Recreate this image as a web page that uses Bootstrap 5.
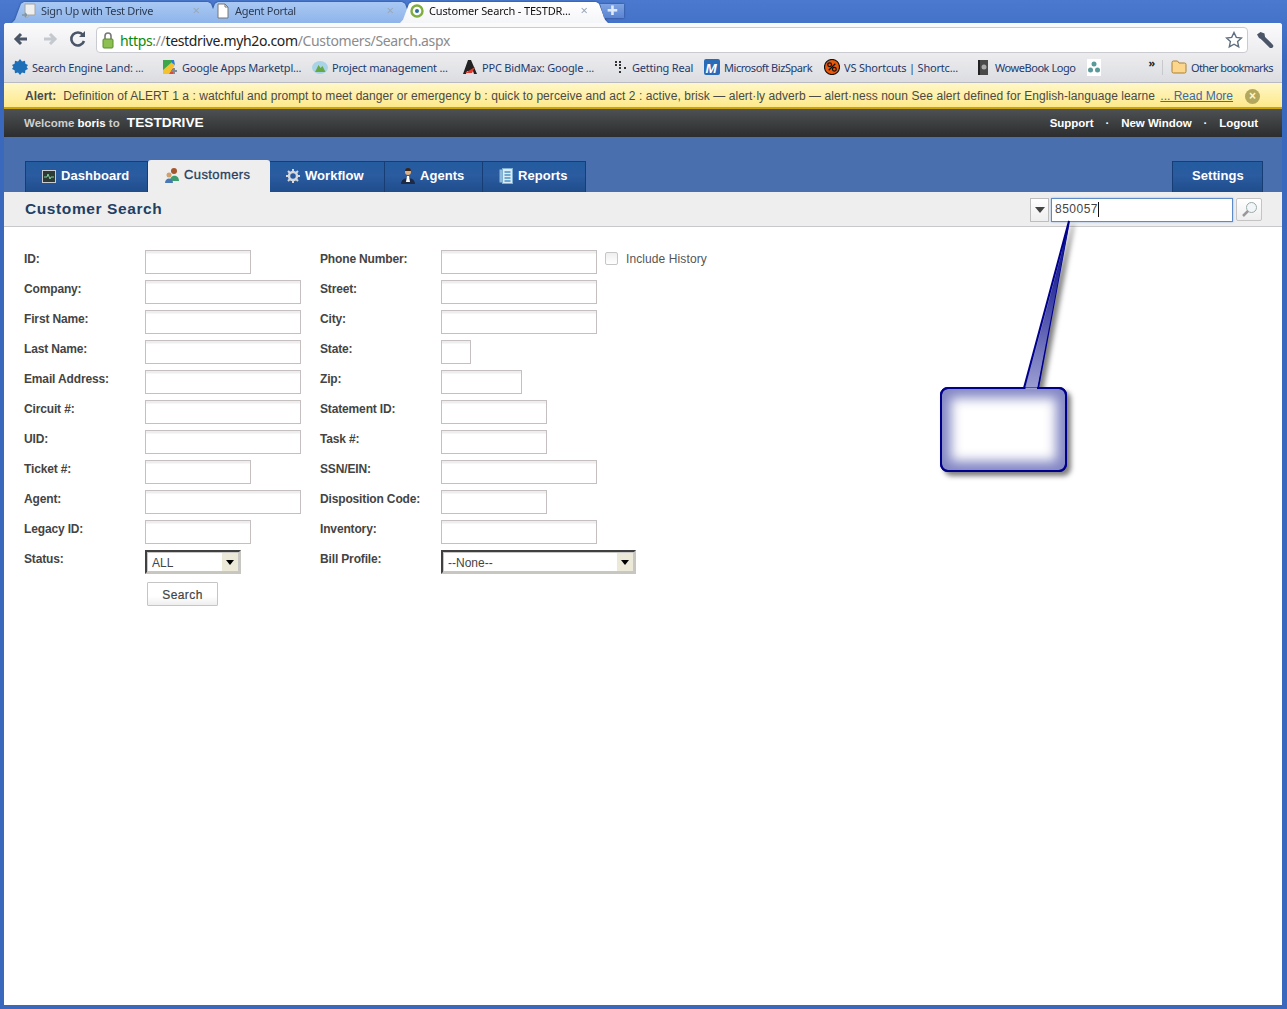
<!DOCTYPE html>
<html lang="en">
<head>
  <meta charset="UTF-8" />
  <title>Customer Search - TESTDRIVE</title>
  <link href="https://cdn.jsdelivr.net/npm/bootstrap@5.3.0/dist/css/bootstrap.min.css" rel="stylesheet" />
  <style>
    html, body { height: 100%; overflow: hidden; }
    body { font-family: "Liberation Sans", Arial, sans-serif; background: #3f6fc4; }
    .win-frame { height: 1009px; width: 1287px; background: linear-gradient(#4a79cf, #3a68bd 60px); position: relative; }

    /* browser tabs */
    .tab-strip { height: 23px; padding-left: 12px; filter: drop-shadow(0 0 1px #23437e); }
    .br-tab { height: 21px; margin-top: 2px; margin-right: -14px; padding: 0 20px 4px 9px; font: 11px "Noto Sans", "Liberation Sans", sans-serif; color: #2c3a50; background: linear-gradient(#a9c9f4, #8fb4ea); clip-path: polygon(0 100%, 3px 85%, 9px 8%, 12px 0, calc(100% - 12px) 0, calc(100% - 9px) 8%, calc(100% - 3px) 85%, 100% 100%); width: 208px; }
    .br-tab.is-open { background: linear-gradient(#fff, #f4f5f8); color: #111; }
    .br-tab .tab-title { flex: 1; white-space: nowrap; overflow: hidden; letter-spacing: -.3px; }
    .br-tab .tab-title-wide { letter-spacing: -.15px; }
    .br-tab .tab-x { color: #9aa7b8; font-size: 13px; line-height: 1; }
    .newtab-btn { width: 24px; height: 14px; margin: 4px 0 0 6px; background: linear-gradient(#7fa3e2, #5a84d2); clip-path: polygon(0 0, 100% 0, 100% 100%, 4px 100%); color: #dfe9fa; font-size: 13px; line-height: 13px; text-align: center; }

    .br-body { position: absolute; left: 4px; right: 5px; top: 23px; bottom: 4px; background: #fff; border-radius: 3px 3px 0 0; overflow: hidden; }
    .br-toolbar { height: 31px; padding: 4px 6px 0 6px; background: linear-gradient(#fbfbfc, #ececef); }
    .nav-ico { width: 28px; height: 24px; }
    .url-box { width: 1152px; height: 26px; margin-left: 2px; background: #fff; border: 1px solid #c9cbd0; border-radius: 4px; font: 14px "Noto Sans", "Liberation Sans", sans-serif; letter-spacing: -.35px; padding: 0 4px; color: #222; }
    .url-box .u-lock { margin-right: 5px; }
    .url-box .u-https { color: #0a8a0a; }
    .url-box .u-rest { color: #8b8b8b; }

    .bm-bar { height: 29px; padding: 0 9px 2px 8px; background: linear-gradient(#ececef, #dcdde1); border-bottom: 1px solid #b9bbc0; font: 11px "Noto Sans", "Liberation Sans", sans-serif; color: #243a6b; white-space: nowrap; letter-spacing: -.2px; }
    .bm-item { gap: 4px; }
    .bm-item svg { flex: none; }
    .bm-w90 { width: 92px; } .bm-w112 { width: 112px; } .bm-w120 { width: 120px; } .bm-w150 { width: 150px; } .bm-w151 { width: 151px; }
    .bm-tight { letter-spacing: -.45px; }
    .bm-more { margin: -9px 7px 0 0; color: #222; font-weight: 700; }
    .bm-other { border-left: 1px solid #c8c9cc; padding-left: 8px; gap: 4px; letter-spacing: -.6px; }

    .alert-strip { height: 26px; padding: 2px 22px 0 21px; background: linear-gradient(#fff7c9, #fde98a); border-bottom: 2px solid #c9a40c; font-size: 12px; color: #4a4a4a; white-space: nowrap; }
    .alert-strip b { margin-right: 7px; }
    .alert-msg { width: 1094px; letter-spacing: .06px; }
    .alert-more { color: #3c69ad; margin-left: 4px; }
    .alert-close { width: 15px; height: 15px; margin-left: 12px; background: #b3a75e; color: #fff6c8; border-radius: 50%; font-size: 12px; line-height: 15px; text-align: center; font-weight: 700; }

    .welcome-strip { height: 28px; padding: 1px 24px 0 20px; background: linear-gradient(#4e5153, #2b2d2e); color: #fff; font-size: 11.5px; font-weight: 700; }
    .welcome-strip .w-dim { color: #cfcfcf; }
    .welcome-strip .w-site { font-size: 13.700px; margin-left: 4px; }
    .welcome-strip .w-dot { margin: 0 12px; }
    .w-links { letter-spacing: -.05px; }

    .nav-zone { height: 55px; padding: 0 19px 0 21px; background: #4a6fae; }
    .app-tab { height: 31px; padding: 0 0 2px 16px; gap: 5px; background: linear-gradient(#235c9f, #2b5ba0 45%, #1f4d8c); border: 1px solid #173e74; border-bottom: 0; border-left-width: 0; color: #fff; font-size: 13px; font-weight: 700; letter-spacing: .05px; }
    .app-tab.first-tab { border-left-width: 1px; }
    .app-tab svg { flex: none; }
    .app-tab.is-open { height: 32px; background: #eeeeee; border: 0; gap: 4px; color: #27405f; border-radius: 3px 3px 0 0; font-weight: 400; letter-spacing: .4px; -webkit-text-stroke: .3px #27405f; }
    .tab-dash { width: 123px; } .tab-cust { width: 122px; } .tab-flow { width: 115px; } .tab-agent { width: 98px; } .tab-rep { width: 103px; }
    .tab-set { width: 91px; padding: 0 0 2px 19px; }

    .title-strip { height: 35px; padding: 1px 21px 0; background: #eeeeee; border-bottom: 1px solid #c9c6cc; }
    .title-strip h1 { font-size: 15.500px; margin: 0; font-weight: 700; color: #1f3f63; letter-spacing: .6px; }
    .qs-drop { width: 19px; height: 24px; background: linear-gradient(#fff, #eee); border: 1px solid #bdbdbd; margin-right: 2px; }
    .qs-drop i { border: 5px solid transparent; border-top: 6px solid #444; border-bottom: 0; }
    .qs-field { width: 182px; height: 24px; padding: 0 0 1px 3px; background: #fff; border: 1px solid #5d8ac8; box-shadow: 0 0 2px #8fb5e6; font-size: 12px; letter-spacing: .5px; color: #444; }
    .qs-caret { width: 1px; height: 15px; background: #111; }
    .qs-go { width: 26px; height: 23px; margin-left: 3px; margin-right: -1px; background: linear-gradient(#fff, #eee); border: 1px solid #c4c4c4; border-radius: 2px; }

    .search-zone { padding: 23px 0 0 20px; gap: 19px; font-size: 12px; }
    .field-row { height: 30px; }
    .field-lbl { font-weight: 700; color: #444; margin: 0; letter-spacing: -.15px; width: 121px; }
    .plain-input.form-control { height: 24px; padding: 0 3px; border: 1px solid #c5bfbf; border-radius: 0; background: linear-gradient(#eeeeee 2px, #fff 3px); box-shadow: none; font-size: 12px; min-height: 0; }
    .w-30 { width: 30px; } .w-81 { width: 81px; } .w-106 { width: 106px; } .w-156 { width: 156px; }
    .sel-96 { width: 96px; } .sel-195 { width: 195px; }
    .plain-select.form-select { height: 24px; padding: 1px 0 0 5px; border-radius: 0; border: 2px solid; border-color: #404040 #c8c6c0 #c8c6c0 #404040; font-size: 12px; color: #444; background-color: #fff; background-image: linear-gradient(#ece9d8, #ece9d8); background-size: 16px 18px; background-position: right 1px center; box-shadow: 0 0 0 1px #c9c6c6 inset; }
    .sel-wrap { position: relative; }
    .sel-wrap::after { content: ""; position: absolute; right: 7px; top: 10px; border: 4px solid transparent; border-top: 5px solid #000; border-bottom: 0; pointer-events: none; }
    .hist-box.form-check-input { width: 13px; height: 13px; margin: 2px 8px 0 8px; border: 1px solid #c6c6c6; border-radius: 2px; background: linear-gradient(#eee, #fff); flex: none; }
    .hist-lbl { color: #555; letter-spacing: .1px; }
    .go-btn.btn { width: 71px; height: 24px; margin: 2px 0 0 2px; padding: 1px 0 0; border: 1px solid #c5c5c5; border-radius: 1px; background: linear-gradient(#fff 60%, #eee); font-size: 12px; font-weight: 400; color: #444; letter-spacing: .4px; -webkit-text-stroke: .2px #444; }
    .callout-mark { position: absolute; left: -4px; top: -23px; pointer-events: none; }
  </style>
</head>
<body>
<div class="win-frame">

  <!-- browser tabs -->
  <div class="tab-strip d-flex">
    <div class="br-tab d-flex align-items-center gap-1">
      <svg width="16" height="16" viewBox="0 0 16 16"><path d="M4 1h10v11H7v2H4z" fill="#efefef" stroke="#a4a4a4"/><path d="M1 12h5M4 10l2 2-2 2" fill="none" stroke="#7d97a5" stroke-width="1.300"/></svg>
      <span class="tab-title">Sign Up with Test Drive</span><span class="tab-x">×</span>
    </div>
    <div class="br-tab d-flex align-items-center gap-1">
      <svg width="16" height="16" viewBox="0 0 16 16"><path d="M3 1h7l3 3v11H3z" fill="#fff" stroke="#777"/><path d="M10 1v3h3" fill="none" stroke="#777"/></svg>
      <span class="tab-title">Agent Portal</span><span class="tab-x">×</span>
    </div>
    <div class="br-tab is-open d-flex align-items-center gap-1">
      <svg width="16" height="16" viewBox="0 0 16 16"><circle cx="8" cy="8" r="5.500" fill="none" stroke="#7fae3f" stroke-width="2.400"/><circle cx="8" cy="8" r="2" fill="#2b6f9c"/></svg>
      <span class="tab-title tab-title-wide">Customer Search - TESTDR...</span><span class="tab-x">×</span>
    </div>
    <div class="newtab-btn">✚</div>
  </div>

  <div class="br-body">
    <!-- toolbar -->
    <div class="br-toolbar d-flex align-items-start">
      <svg class="nav-ico" viewBox="0 0 28 24"><path d="M17 12H6M11 7l-5 5 5 5" fill="none" stroke="#4a5568" stroke-width="3"/></svg>
      <svg class="nav-ico" viewBox="0 0 28 24"><path d="M6 12h11M12 7l5 5-5 5" fill="none" stroke="#c4c8cf" stroke-width="3"/></svg>
      <svg class="nav-ico" viewBox="0 0 28 24"><path d="M17 8a6.500 6.500 0 1 0 1 6" fill="none" stroke="#4a5568" stroke-width="2.600"/><path d="M19 4v6h-6z" fill="#4a5568"/></svg>
      <div class="url-box d-flex align-items-center">
        <svg class="u-lock" width="14" height="18" viewBox="0 0 14 18"><path d="M4 8V5a3 3 0 0 1 6 0v3" fill="none" stroke="#777" stroke-width="1.600"/><rect x="2" y="8" width="10" height="9" rx="1" fill="#8cc152" stroke="#5c8a2c"/></svg>
        <span><span class="u-https">https</span><span class="u-rest">://</span>testdrive.myh2o.com<span class="u-rest">/Customers/Search.aspx</span></span>
        <svg class="ms-auto" width="18" height="18" viewBox="0 0 18 18"><path d="M9 1.500l2.300 4.900 5.200.6-3.900 3.600 1.100 5.300L9 13.200l-4.700 2.700 1.100-5.300L1.500 7l5.200-.6z" fill="#fff" stroke="#5f6f80" stroke-width="1.400"/></svg>
      </div>
      <svg class="ms-2 mt-1" width="18" height="17" viewBox="0 0 18 17"><path d="M7 7l8 8" stroke="#4a5568" stroke-width="4.500" stroke-linecap="round"/><path d="M4.500 1L1 3.500 3 7l3 1.500L9 6 8.500 2.500z" fill="#4a5568"/></svg>
    </div>

    <!-- bookmarks -->
    <div class="bm-bar d-flex align-items-center">
      <div class="bm-item bm-w150 d-flex align-items-center">
        <svg width="16" height="16" viewBox="0 0 16 16"><path d="M8 0l2 2.400 3-.6.4 3 2.600 1.200-1.400 2 1.400 2-2.600 1.200-.4 3-3-.6L8 16l-2-2.400-3 .6-.4-3L0 10l1.400-2L0 6l2.600-1.200.4-3 3 .6z" fill="#1d6fb8"/></svg>
        <span>Search Engine Land: ...</span></div>
      <div class="bm-item bm-w150 d-flex align-items-center">
        <svg width="16" height="16" viewBox="0 0 16 16"><path d="M1 1h9v3L1 12z" fill="#3da64a"/><path d="M1 15V11l9-8 3 3-6 9z" fill="#f2c230"/><path d="M7 15l4-6v6z" fill="#d94b3a"/><path d="M9 1h3l1 5-3-2z" fill="#2a7fd4"/><path d="M9 12h6M12 9v6" stroke="#7e8a96" stroke-width="2"/></svg>
        <span>Google Apps Marketpl...</span></div>
      <div class="bm-item bm-w150 d-flex align-items-center">
        <svg width="16" height="16" viewBox="0 0 16 16"><ellipse cx="8" cy="8.500" rx="8" ry="6.500" fill="#a9d3e6"/><path d="M3 13l3.500-7 2 3 2-2 3 6z" fill="#65a844"/></svg>
        <span>Project management ...</span></div>
      <div class="bm-item bm-w150 d-flex align-items-center">
        <svg width="16" height="16" viewBox="0 0 16 16"><path d="M6 1h3l6 14h-3l-1-3H5l-1 3H1z" fill="#222"/><path d="M3 14l10-6-3 6z" fill="#e03a2f"/></svg>
        <span>PPC BidMax: Google ...</span></div>
      <div class="bm-item bm-w90 d-flex align-items-center">
        <svg width="16" height="16" viewBox="0 0 16 16"><path d="M3 2h2v2H3zM3 5h2v2H3zM7 2h2v2H7zM7 5h2v2H7zM7 8h2v2H7zM12 8h2v2h-2zM7 12h2v2H7z" fill="#333"/></svg>
        <span>Getting Real</span></div>
      <div class="bm-item bm-w120 d-flex align-items-center">
        <svg width="16" height="16" viewBox="0 0 16 16"><rect width="16" height="16" rx="2" fill="#2a6bb8"/><text x="1.500" y="13.500" font-size="13.500" font-weight="700" font-style="italic" fill="#fff" font-family="Liberation Sans">M</text></svg>
        <span class="bm-tight">Microsoft BizSpark</span></div>
      <div class="bm-item bm-w151 d-flex align-items-center">
        <svg width="16" height="16" viewBox="0 0 17 17"><circle cx="8.500" cy="8.500" r="8" fill="#e8590c" stroke="#111" stroke-width="1.200"/><circle cx="6" cy="6" r="2" fill="none" stroke="#111" stroke-width="1.300"/><circle cx="11" cy="11" r="2" fill="none" stroke="#111" stroke-width="1.300"/><path d="M5 12l7-7" stroke="#111" stroke-width="1.300"/></svg>
        <span>VS Shortcuts | Shortc...</span></div>
      <div class="bm-item bm-w112 d-flex align-items-center">
        <svg width="16" height="17" viewBox="0 0 16 17"><rect x="3" y="1" width="10" height="15" fill="#4a4a4a"/><rect x="3" y="1" width="2" height="15" fill="#222"/><circle cx="9" cy="8" r="2.500" fill="#aaa"/></svg>
        <span class="bm-tight">WoweBook Logo</span></div>
      <svg width="14" height="17" viewBox="0 0 14 17"><rect width="14" height="17" fill="#fff"/><circle cx="7" cy="5" r="2.500" fill="#5a9a9a"/><circle cx="3.500" cy="11" r="2.500" fill="#5a9a9a"/><circle cx="10.500" cy="11" r="2.500" fill="#5a9a9a"/></svg>
      <span class="bm-more ms-auto">»</span>
      <div class="bm-item bm-other d-flex align-items-center">
        <svg width="16" height="14" viewBox="0 0 16 14"><path d="M1 2.500A1.500 1.500 0 0 1 2.500 1h4l1.500 2h5.500A1.500 1.500 0 0 1 15 4.500v7a1.500 1.500 0 0 1-1.500 1.500h-11A1.500 1.500 0 0 1 1 11.500z" fill="#fbd68c" stroke="#a8803a"/></svg>
        <span>Other bookmarks</span></div>
    </div>

    <!-- alert -->
    <div class="alert-strip d-flex align-items-center">
      <b>Alert:</b>
      <span class="alert-msg">Definition of ALERT 1 a : watchful and prompt to meet danger or emergency b : quick to perceive and act 2 : active, brisk — alert·ly adverb — alert·ness noun See alert defined for English-language learne</span>
      <a href="#" class="alert-more">... Read More</a>
      <span class="alert-close">×</span>
    </div>

    <!-- welcome bar -->
    <div class="welcome-strip d-flex align-items-center">
      <span><span class="w-dim">Welcome</span> boris <span class="w-dim">to</span> <span class="w-site">TESTDRIVE</span></span>
      <span class="w-links ms-auto">Support<span class="w-dot">·</span>New Window<span class="w-dot">·</span>Logout</span>
    </div>

    <!-- main tabs -->
    <div class="nav-zone d-flex align-items-end">
      <div class="app-tab first-tab tab-dash d-flex align-items-center">
        <svg width="14" height="13" viewBox="0 0 14 13"><rect x=".5" y=".5" width="13" height="12" fill="#2d3a35" stroke="#c9ccd0"/><path d="M2 7h3l1-3 2 5 1-2h3" fill="none" stroke="#7fd09a"/></svg>Dashboard</div>
      <div class="app-tab is-open tab-cust d-flex align-items-center">
        <svg width="16" height="17" viewBox="0 0 16 17"><circle cx="10" cy="4" r="3" fill="#a5562f"/><path d="M6 14c0-7 9-7 9 0z" fill="#3f9c6e"/><circle cx="5" cy="8" r="2.500" fill="#d2a06e"/><path d="M1 16c0-6 8-6 8 0z" fill="#4a78b5"/></svg>Customers</div>
      <div class="app-tab tab-flow d-flex align-items-center">
        <svg width="14" height="14" viewBox="0 0 14 14"><circle cx="7" cy="7" r="4" fill="none" stroke="#d5d8dc" stroke-width="2.500"/><path d="M7 0v3M7 11v3M0 7h3M11 7h3M2 2l2 2M10 10l2 2M12 2l-2 2M4 10l-2 2" stroke="#d5d8dc" stroke-width="2"/></svg>Workflow</div>
      <div class="app-tab tab-agent d-flex align-items-center">
        <svg width="14" height="16" viewBox="0 0 14 16"><circle cx="7" cy="4" r="3" fill="#e0b080"/><path d="M4 3a3 3 0 0 1 6 0z" fill="#3a2415"/><path d="M0 16c0-8 14-8 14 0z" fill="#1c2a44"/><path d="M6 8h2l1 6H5z" fill="#fff"/></svg>Agents</div>
      <div class="app-tab tab-rep d-flex align-items-center">
        <svg width="14" height="16" viewBox="0 0 14 16"><rect x=".5" y="1.500" width="4" height="13" fill="#8fb8d8"/><rect x="3.500" y=".5" width="10" height="15" fill="#dcecf7" stroke="#7fb0d4"/><path d="M5.500 4h6M5.500 7h6M5.500 10h6M5.500 13h6" stroke="#4a90c4" stroke-width="1.500"/></svg>Reports</div>
      <div class="app-tab first-tab tab-set ms-auto d-flex align-items-center">Settings</div>
    </div>

    <!-- page title and quick search -->
    <div class="title-strip d-flex align-items-center">
      <h1>Customer Search</h1>
      <div class="qs-drop ms-auto d-flex align-items-center justify-content-center"><i></i></div>
      <div class="qs-field d-flex align-items-center">850057<span class="qs-caret"></span></div>
      <div class="qs-go d-flex align-items-center justify-content-center">
        <svg width="17" height="17" viewBox="0 0 17 17"><circle cx="10.500" cy="6.500" r="5" fill="#f2f6f8" stroke="#9aa"/><path d="M7 10l-5 5" stroke="#999" stroke-width="2.500"/></svg>
      </div>
    </div>

    <!-- search form -->
    <form class="search-zone d-flex">
      <div>
        <div class="field-row d-flex"><label class="field-lbl">ID:</label><input type="text" class="plain-input form-control w-106" /></div>
        <div class="field-row d-flex"><label class="field-lbl">Company:</label><input type="text" class="plain-input form-control w-156" /></div>
        <div class="field-row d-flex"><label class="field-lbl">First Name:</label><input type="text" class="plain-input form-control w-156" /></div>
        <div class="field-row d-flex"><label class="field-lbl">Last Name:</label><input type="text" class="plain-input form-control w-156" /></div>
        <div class="field-row d-flex"><label class="field-lbl">Email Address:</label><input type="text" class="plain-input form-control w-156" /></div>
        <div class="field-row d-flex"><label class="field-lbl">Circuit #:</label><input type="text" class="plain-input form-control w-156" /></div>
        <div class="field-row d-flex"><label class="field-lbl">UID:</label><input type="text" class="plain-input form-control w-156" /></div>
        <div class="field-row d-flex"><label class="field-lbl">Ticket #:</label><input type="text" class="plain-input form-control w-106" /></div>
        <div class="field-row d-flex"><label class="field-lbl">Agent:</label><input type="text" class="plain-input form-control w-156" /></div>
        <div class="field-row d-flex"><label class="field-lbl">Legacy ID:</label><input type="text" class="plain-input form-control w-106" /></div>
        <div class="field-row d-flex"><label class="field-lbl">Status:</label><div class="sel-wrap"><select class="plain-select form-select sel-96"><option>ALL</option></select></div></div>
        <div class="field-row d-flex"><span class="field-lbl"></span><button type="button" class="go-btn btn">Search</button></div>
      </div>
      <div>
        <div class="field-row d-flex"><label class="field-lbl">Phone Number:</label><input type="text" class="plain-input form-control w-156" /><input type="checkbox" class="hist-box form-check-input" /><span class="hist-lbl">Include History</span></div>
        <div class="field-row d-flex"><label class="field-lbl">Street:</label><input type="text" class="plain-input form-control w-156" /></div>
        <div class="field-row d-flex"><label class="field-lbl">City:</label><input type="text" class="plain-input form-control w-156" /></div>
        <div class="field-row d-flex"><label class="field-lbl">State:</label><input type="text" class="plain-input form-control w-30" /></div>
        <div class="field-row d-flex"><label class="field-lbl">Zip:</label><input type="text" class="plain-input form-control w-81" /></div>
        <div class="field-row d-flex"><label class="field-lbl">Statement ID:</label><input type="text" class="plain-input form-control w-106" /></div>
        <div class="field-row d-flex"><label class="field-lbl">Task #:</label><input type="text" class="plain-input form-control w-106" /></div>
        <div class="field-row d-flex"><label class="field-lbl">SSN/EIN:</label><input type="text" class="plain-input form-control w-156" /></div>
        <div class="field-row d-flex"><label class="field-lbl">Disposition Code:</label><input type="text" class="plain-input form-control w-106" /></div>
        <div class="field-row d-flex"><label class="field-lbl">Inventory:</label><input type="text" class="plain-input form-control w-156" /></div>
        <div class="field-row d-flex"><label class="field-lbl">Bill Profile:</label><div class="sel-wrap"><select class="plain-select form-select sel-195"><option>--None--</option></select></div></div>
      </div>
    </form>

    <!-- callout drawn over the page -->
    <svg class="callout-mark" width="1287" height="1009" viewBox="0 0 1287 1009">
      <defs>
        <linearGradient id="tailFade" x1="0" y1="0" x2="0" y2="1"><stop offset="0" stop-color="#000d8c"/><stop offset=".35" stop-color="#2b2f9a"/><stop offset="1" stop-color="#9c9fd2"/></linearGradient>
        <filter id="softEdge" x="-30%" y="-30%" width="160%" height="160%"><feGaussianBlur stdDeviation="6"/></filter>
        <filter id="dropDark" x="-30%" y="-30%" width="160%" height="160%"><feDropShadow dx="4" dy="4" stdDeviation="2.500" flood-color="#000" flood-opacity=".5"/></filter>
        <clipPath id="boxClip"><rect x="941" y="388" width="125" height="83" rx="7"/></clipPath>
      </defs>
      <g filter="url(#dropDark)">
        <path d="M948 388H1024L1069 221L1038 388H1059a7 7 0 0 1 7 7V464a7 7 0 0 1-7 7H948a7 7 0 0 1-7-7V395a7 7 0 0 1 7-7z" fill="#8488c4" stroke="#00008b" stroke-width="2"/>
      </g>
      <path d="M1025.500 389L1069 225L1037 389z" fill="url(#tailFade)"/>
      <g clip-path="url(#boxClip)">
        <rect x="951" y="398" width="105" height="63" fill="#fff" filter="url(#softEdge)"/>
      </g>
      <rect x="941" y="388" width="125" height="83" rx="7" fill="none" stroke="#00008b" stroke-width="2"/>
      <path d="M1025.500 388.500H1037" stroke="#9c9fd2" stroke-width="2"/>
    </svg>
  </div>
</div>
<script src="https://cdn.jsdelivr.net/npm/bootstrap@5.3.0/dist/js/bootstrap.bundle.min.js"></script>
</body>
</html>
